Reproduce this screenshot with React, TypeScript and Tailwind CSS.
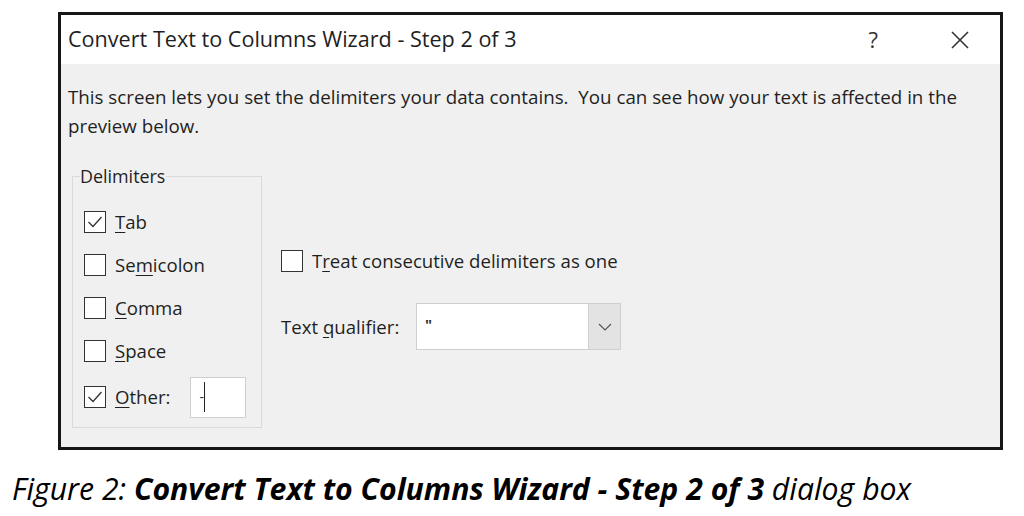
import React from 'react';

const font = { fontFamily: '"Open Sans", "Noto Sans", "Liberation Sans", sans-serif' };

function CheckBox({ checked }: { checked?: boolean }) {
  return (
    <span className="flex h-[22px] w-[22px] shrink-0 items-center justify-center border-[1.5px] border-[#333] bg-white">
      {checked && (
        <svg width="18" height="18" viewBox="0 0 18 18" fill="none">
          <path d="M2.5 9 L7 13.5 L15.5 4" stroke="#333" strokeWidth="1.3" />
        </svg>
      )}
    </span>
  );
}

function Option({ pre, key_, post, checked }: { pre: string; key_: string; post: string; checked?: boolean }) {
  return (
    <div className="flex h-[22px] items-center gap-[9px]">
      <CheckBox checked={checked} />
      <span className="text-[18.6px] leading-none text-[#1f1f1f]">
        {pre}
        <span className="underline underline-offset-[3px]">{key_}</span>
        {post}
      </span>
    </div>
  );
}

export default function App() {
  return (
    <div className="h-[516px] w-[1024px] bg-white" style={font}>
      <div className="pt-[12px] pl-[58px]">
        <div className="h-[438px] w-[945px] border-[3px] border-[#161616] bg-[#f0f0f0]">
          {/* title bar */}
          <div className="flex h-[49px] items-center bg-white pl-[7px] pr-[30px]">
            <span className="flex-1 text-[21.6px] text-[#1f1f1f]">Convert Text to Columns Wizard - Step 2 of 3</span>
            <span className="mr-[72px] text-[22px] text-[#333]">?</span>
            <svg width="20" height="20" viewBox="0 0 20 20">
              <path d="M2 2 L18 18 M18 2 L2 18" stroke="#333" strokeWidth="1.6" />
            </svg>
          </div>

          <div className="px-[7px] pt-[18px] text-[18.75px] leading-[29px] text-[#1f1f1f]">
            <div className="whitespace-nowrap">
              This screen lets you set the delimiters your data contains.&nbsp; You can see how your text is affected in the
            </div>
            <div>preview below.</div>
          </div>

          <div className="mt-[36px] flex">
            {/* Delimiters group */}
            <div className="relative ml-[11px] h-[252px] w-[190px] border border-[#dadada]">
              <span className="absolute left-[7px] top-[-12px] bg-[#f0f0f0] pr-[1px] text-[17.9px] leading-[22px] text-[#1f1f1f]">
                Delimiters
              </span>
              <div className="flex flex-col gap-[21px] pl-[11px] pt-[34px]">
                <Option pre="" key_="T" post="ab" checked />
                <Option pre="Se" key_="m" post="icolon" />
                <Option pre="" key_="C" post="omma" />
                <Option pre="" key_="S" post="pace" />
                <div className="mt-[3px] flex h-[22px] items-center">
                  <Option pre="" key_="O" post="ther:" checked />
                  <div className="ml-[20px] flex h-[41px] w-[56px] items-center border border-[#cfcfcf] bg-white pl-[8px]">
                    <span className="text-[14px] leading-none text-[#333]">-</span>
                    <span className="h-[30px] w-[1.5px] bg-[#222]" />
                  </div>
                </div>
              </div>
            </div>

            <div className="ml-[19px] pt-[74px]">
              <Option pre="T" key_="r" post="eat consecutive delimiters as one" />
              <div className="mt-[31px] flex items-center">
                <span className="w-[135px] text-[18.6px] text-[#1f1f1f]">
                  Text <span className="underline underline-offset-[3px]">q</span>ualifier:
                </span>
                <div className="flex h-[47px] w-[205px] border border-[#cfcfcf] bg-white">
                  <span className="flex-1 pl-[8px] pt-[9px] text-[15px] font-bold text-[#333]">"</span>
                  <div className="flex w-[32px] items-center justify-center border-l border-[#cfcfcf] bg-[#e3e3e3]">
                    <svg width="14" height="8" viewBox="0 0 14 8">
                      <path d="M1 1 L7 7 L13 1" stroke="#555" strokeWidth="1.2" fill="none" />
                    </svg>
                  </div>
                </div>
              </div>
            </div>
          </div>
        </div>
      </div>

      <div className="mt-[22px] pl-[12px] text-[30.2px] italic leading-[34px] text-black">
        Figure 2: <span className="font-bold">Convert Text to Columns Wizard - Step 2 of 3</span> dialog box
      </div>
    </div>
  );
}
